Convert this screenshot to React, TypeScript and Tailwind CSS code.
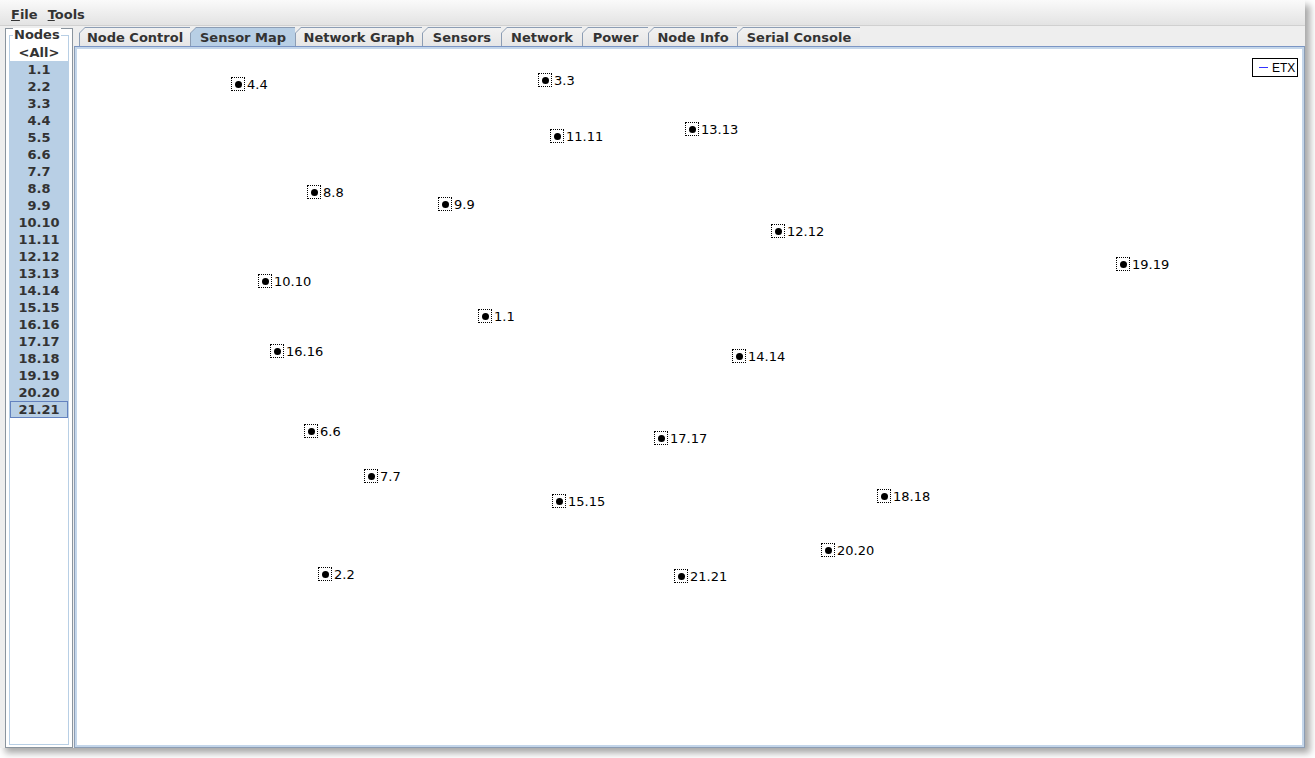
import React from "react";

const nodeList = [
  "1.1", "2.2", "3.3", "4.4", "5.5", "6.6", "7.7", "8.8", "9.9", "10.10", "11.11",
  "12.12", "13.13", "14.14", "15.15", "16.16", "17.17", "18.18", "19.19", "20.20", "21.21",
];

const tabs = [
  { label: "Node Control", w: 111 },
  { label: "Sensor Map", w: 105, active: true },
  { label: "Network Graph", w: 127 },
  { label: "Sensors", w: 79 },
  { label: "Network", w: 81 },
  { label: "Power", w: 66 },
  { label: "Node Info", w: 89 },
  { label: "Serial Console", w: 123 },
];

// page coords: box left x, centre y
const mapNodes = [
  { id: "4.4", x: 231, y: 84 },
  { id: "3.3", x: 538, y: 80 },
  { id: "11.11", x: 550, y: 136 },
  { id: "13.13", x: 685, y: 129 },
  { id: "8.8", x: 307, y: 192 },
  { id: "9.9", x: 438, y: 204 },
  { id: "12.12", x: 771, y: 231 },
  { id: "19.19", x: 1116, y: 264 },
  { id: "10.10", x: 258, y: 281 },
  { id: "1.1", x: 478, y: 316 },
  { id: "16.16", x: 270, y: 351 },
  { id: "14.14", x: 732, y: 356 },
  { id: "6.6", x: 304, y: 431 },
  { id: "17.17", x: 654, y: 438 },
  { id: "7.7", x: 364, y: 476 },
  { id: "15.15", x: 552, y: 501 },
  { id: "18.18", x: 877, y: 496 },
  { id: "20.20", x: 821, y: 550 },
  { id: "2.2", x: 318, y: 574 },
  { id: "21.21", x: 674, y: 576 },
];

const Tab = ({ label, w, active }: { label: string; w: number; active?: boolean }) => (
  <div
    className="h-[19px] bg-[#8c9db4] pt-px pl-px [clip-path:polygon(6px_0,100%_0,100%_100%,0_100%,0_6px)]"
    style={{ width: w }}
  >
    <div
      className={
        "h-full flex items-center justify-center text-[13px] font-bold text-[#333333] leading-none [clip-path:polygon(5px_0,100%_0,100%_100%,0_100%,0_5px)] " +
        (active ? "bg-[#b8cfe5]" : "bg-gradient-to-b from-[#f2f2f2] to-[#e6e6e6]")
      }
    >
      {label}
    </div>
  </div>
);

const MapNode = ({ id, x, y }: { id: string; x: number; y: number }) => (
  <div className="absolute flex items-center gap-[2px]" style={{ left: x - 77, top: y - 7 - 49 }}>
    <div className="w-[14px] h-[14px] border border-dotted border-black flex items-center justify-center">
      <div className="w-[7px] h-[7px] rounded-full bg-black" />
    </div>
    <span className="text-[13px] leading-none text-black">{id}</span>
  </div>
);

export default function App() {
  return (
    <div className="w-[1315px] h-[758px] bg-white overflow-hidden font-['DejaVu_Sans',sans-serif]">
      <div className="w-[1305px] h-[748px] bg-[#eeeeee] flex flex-col shadow-[5px_5px_7px_rgba(0,0,0,0.35)]">
        {/* menu bar */}
        <div className="h-[26px] shrink-0 flex items-center gap-[10px] pl-[11px] pt-[4px] bg-gradient-to-b from-[#fafafa] to-[#e3e3e3] border-b border-[#d0d0d0] text-[13px] font-bold text-[#333333]">
          <span><span className="underline">F</span>ile</span>
          <span><span className="underline">T</span>ools</span>
        </div>

        <div className="flex-1 flex pt-[1px] min-h-0">
          {/* node list panel */}
          <div className="ml-[5px] mt-[1px] w-[68px] border border-[#8a949e] bg-white px-[3px] pb-[2px] flex">
            <div className="flex-1 mt-[6px] border border-[#b8cfe5] flex flex-col relative">
              <div className="absolute -top-[8px] left-[3px] bg-white px-[1px] text-[13px] font-bold text-[#333333] leading-none">
                Nodes
              </div>
              <div className="mt-[8px] flex flex-col">
                <div className="h-[17px] flex items-center justify-center text-[13px] font-bold text-[#333333]">
                  &lt;All&gt;
                </div>
                {nodeList.map((n) => (
                  <div
                    key={n}
                    className={
                      "h-[17px] flex items-center justify-center text-[13px] font-bold text-[#333333] bg-[#b8cfe5] " +
                      (n === "21.21" ? "border border-[#6382bf]" : "")
                    }
                  >
                    {n}
                  </div>
                ))}
              </div>
            </div>
          </div>

          {/* tabs + content */}
          <div className="flex-1 flex flex-col ml-[1px]">
            <div className="flex pl-[5px] shrink-0">
              {tabs.map((t) => (
                <Tab key={t.label} {...t} />
              ))}
            </div>
            <div className="flex-1 border border-[#8c9db4] border-t-[#7a95c4] bg-white">
              <div className="h-full border-2 border-[#c4d6ea] relative">
                {mapNodes.map((n) => (
                  <MapNode key={n.id} {...n} />
                ))}
                <div className="absolute top-[9px] right-[4px] w-[46px] h-[19px] border border-black bg-white flex items-center pl-[6px] gap-[4px]">
                  <div className="w-[9px] h-px bg-[#3333ff]" />
                  <span className="text-[12px] leading-none text-black font-['Liberation_Sans',sans-serif]">ETX</span>
                </div>
              </div>
            </div>
          </div>
        </div>
      </div>
    </div>
  );
}
